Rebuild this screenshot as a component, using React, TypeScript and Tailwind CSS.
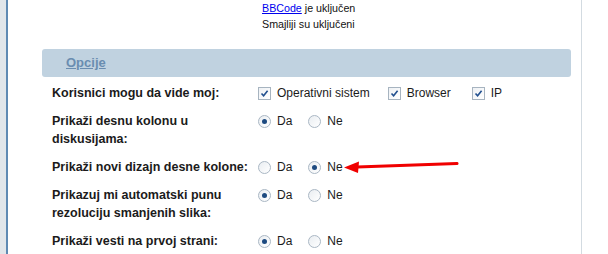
import React from "react";

const font = { fontFamily: '"Liberation Sans", Arial, sans-serif' };

const Check = () => (
  <span className="inline-flex h-[13px] w-[13px] items-center justify-center border border-[#a7b4c0] bg-gradient-to-br from-[#eef1f4] to-white">
    <svg width="9" height="9" viewBox="0 0 9 9">
      <path d="M1.5 4.5 L3.6 6.8 L7.6 1.8" fill="none" stroke="#214f8f" strokeWidth="1.6" />
    </svg>
  </span>
);

const Radio = ({ on }: { on?: boolean }) => (
  <span className="inline-flex h-[13px] w-[13px] items-center justify-center rounded-full border border-[#aab7c4] bg-gradient-to-br from-[#e9edf1] to-white">
    {on && <span className="h-[5px] w-[5px] rounded-full bg-[#1d4a80]" />}
  </span>
);

const YesNo = ({ yes }: { yes: boolean }) => (
  <div className="flex h-[18px] items-center">
    <Radio on={yes} />
    <span className="ml-[6px] mr-[16px]">Da</span>
    <Radio on={!yes} />
    <span className="ml-[6px]">Ne</span>
  </div>
);

const Row = ({ label, children }: { label: React.ReactNode; children: React.ReactNode }) => (
  <div className="flex py-[5px] leading-[18px]">
    <div className="w-[206px] shrink-0 pr-2 text-[12.5px] font-bold text-[#1b1b1b]">{label}</div>
    <div className="text-[12px] text-[#1b1b1b]">{children}</div>
  </div>
);

export default function App() {
  return (
    <div className="flex h-[254px] w-[608px] overflow-hidden bg-white" style={font}>
      <div className="w-[6px] shrink-0 bg-[#e1e6ea]" />
      <div className="w-[2px] shrink-0 bg-[#5f8ab3]" />
      <div className="relative w-[574px] shrink-0 border-r border-[#d3dbe1]">
        <div className="pl-[254px] text-[10.7px] leading-[16px] text-[#111]">
          <div>
            <a className="text-[#0000ee] underline">BBCode</a> je uključen
          </div>
          <div>Smajliji su uključeni</div>
        </div>
        <div className="ml-[34px] mr-[10px] mt-[17px] flex h-[28px] items-center rounded-[3px] bg-[#c0d2e0] pl-[24px]">
          <span className="text-[13px] font-bold text-[#6a8db0] underline">Opcije</span>
        </div>
        <div className="pl-[44px] pt-[2px]">
          <Row label="Korisnici mogu da vide moj:">
            <div className="flex h-[18px] items-center">
              <Check />
              <span className="ml-[6px] mr-[18px]">Operativni sistem</span>
              <Check />
              <span className="ml-[6px] mr-[21px]">Browser</span>
              <Check />
              <span className="ml-[6px]">IP</span>
            </div>
          </Row>
          <Row label={<>Prikaži desnu kolonu u<br />diskusijama:</>}>
            <YesNo yes />
          </Row>
          <Row label="Prikaži novi dizajn desne kolone:">
            <YesNo yes={false} />
          </Row>
          <Row label={<>Prikazuj mi automatski punu<br />rezoluciju smanjenih slika:</>}>
            <YesNo yes />
          </Row>
          <Row label="Prikaži vesti na prvoj strani:">
            <YesNo yes />
          </Row>
        </div>
        <svg className="absolute left-[335px] top-[158px]" width="116" height="16" viewBox="0 0 116 16">
          <path d="M114 5.5 L14 9" stroke="#f00000" strokeWidth="3" strokeLinecap="round" />
          <path d="M1 9.5 L16 3.5 L15 15 Z" fill="#f00000" />
        </svg>
      </div>
    </div>
  );
}
